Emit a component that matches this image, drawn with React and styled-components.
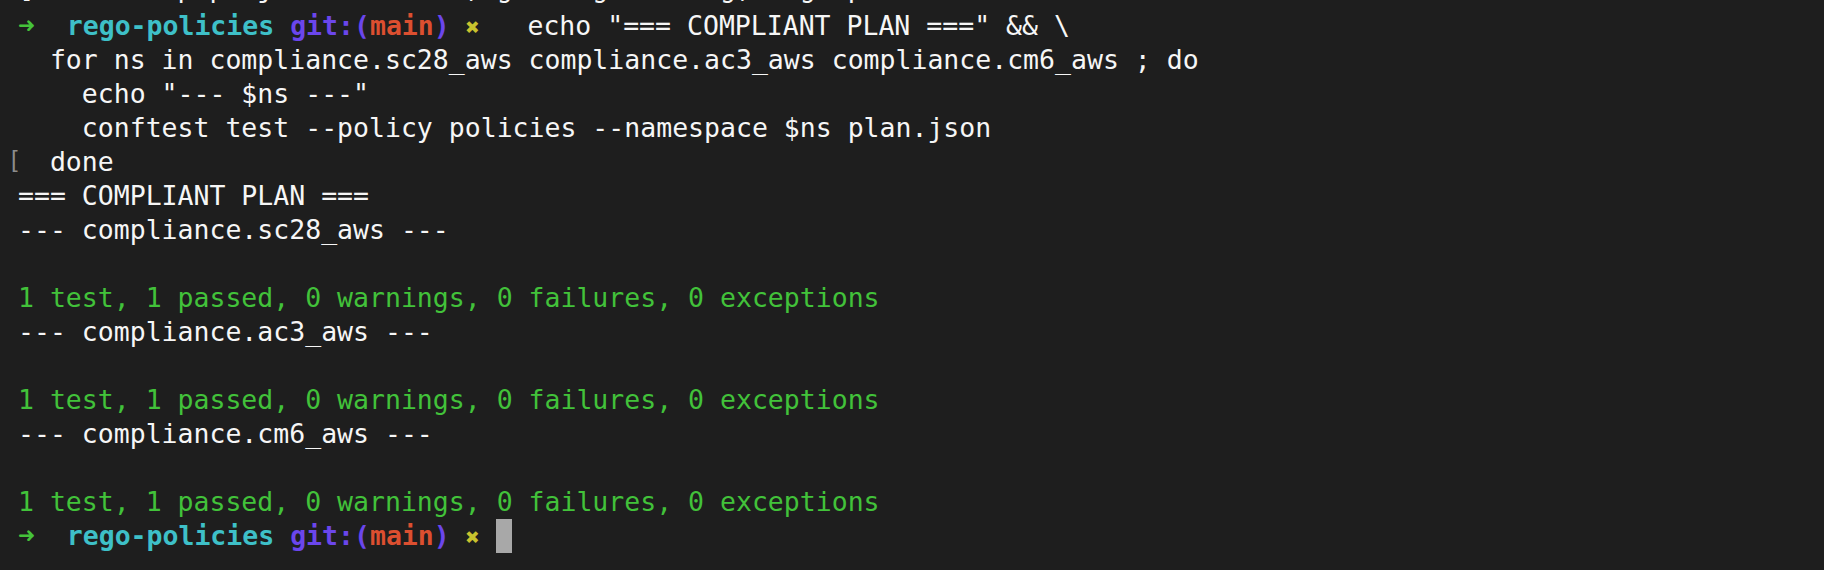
import React from "react";
import styled, { createGlobalStyle } from "styled-components";

const GlobalStyle = createGlobalStyle`
  html, body {
    margin: 0;
    padding: 0;
    background: #1e1e1e;
  }
`;

const Terminal = styled.div`
  width: 1824px;
  height: 570px;
  overflow: hidden;
  background: #1e1e1e;
  font-family: "DejaVu Sans Mono", "Liberation Mono", monospace;
  font-size: 26.5px;
  line-height: 34px;
  color: #f6f6f6;
  box-sizing: border-box;
  padding-left: 18px;
`;

const Scroll = styled.div`
  margin-top: -25px;
  display: flex;
  flex-direction: column;
`;

const Line = styled.div`
  position: relative;
  height: 34px;
  line-height: ${(p) => (p.$scrolled ? "26px" : "34px")};
  white-space: pre;
`;

const Arrow = styled.span`
  display: inline-block;
  width: 1ch;
  color: #45c33a;
  font-weight: bold;
  font-size: 28px;
  vertical-align: top;
`;

const Dir = styled.span`
  color: #3ec0c8;
  font-weight: bold;
`;

const Git = styled.span`
  color: #6b46ec;
  font-weight: bold;
`;

const Branch = styled.span`
  color: #dc4f30;
  font-weight: bold;
`;

const Dirty = styled.span`
  display: inline-block;
  width: 1ch;
  color: #c9c22e;
  font-weight: bold;
  font-size: 23px;
  text-align: center;
  vertical-align: top;
  line-height: 36px;
`;

const Output = styled.span`
  color: ${(p) => (p.$tone === "green" ? "#42c23a" : "#f6f6f6")};
`;

const Cursor = styled.span`
  display: inline-block;
  width: 16px;
  height: 34px;
  background: #a8a8a8;
  vertical-align: top;
`;

const Marker = styled.span`
  position: absolute;
  left: -7px;
  top: 0px;
  font-family: "Liberation Sans", sans-serif;
  font-size: 24px;
  line-height: 28px;
  color: #8c8c8c;
  font-weight: 300;
`;

const Prompt = ({ children }) => (
  <>
    <Arrow>➜</Arrow>
    {"  "}
    <Dir>rego-policies</Dir> <Git>git:(</Git>
    <Branch>main</Branch>
    <Git>)</Git> <Dirty>✖</Dirty>{" "}
    {children}
  </>
);

const results = "1 test, 1 passed, 0 warnings, 0 failures, 0 exceptions";

export default function App() {
  return (
    <>
      <GlobalStyle />
      <Terminal>
        <Scroll>
          <Line $scrolled>
            <Output>{"[ ~/Desktop/projects/sandbox,/grc-engineering,/rego-policies"}</Output>
          </Line>
          <Line>
            <Prompt>
              <Output>{'  echo "=== COMPLIANT PLAN ===" && \\'}</Output>
            </Prompt>
          </Line>
          <Line>
            <Output>{"  for ns in compliance.sc28_aws compliance.ac3_aws compliance.cm6_aws ; do"}</Output>
          </Line>
          <Line>
            <Output>{'    echo "--- $ns ---"'}</Output>
          </Line>
          <Line>
            <Output>{"    conftest test --policy policies --namespace $ns plan.json"}</Output>
          </Line>
          <Line>
            <Marker>[</Marker>
            <Output>{"  done"}</Output>
          </Line>
          <Line>
            <Output>=== COMPLIANT PLAN ===</Output>
          </Line>
          <Line>
            <Output>--- compliance.sc28_aws ---</Output>
          </Line>
          <Line />
          <Line>
            <Output $tone="green">{results}</Output>
          </Line>
          <Line>
            <Output>--- compliance.ac3_aws ---</Output>
          </Line>
          <Line />
          <Line>
            <Output $tone="green">{results}</Output>
          </Line>
          <Line>
            <Output>--- compliance.cm6_aws ---</Output>
          </Line>
          <Line />
          <Line>
            <Output $tone="green">{results}</Output>
          </Line>
          <Line>
            <Prompt>
              <Cursor />
            </Prompt>
          </Line>
        </Scroll>
      </Terminal>
    </>
  );
}
